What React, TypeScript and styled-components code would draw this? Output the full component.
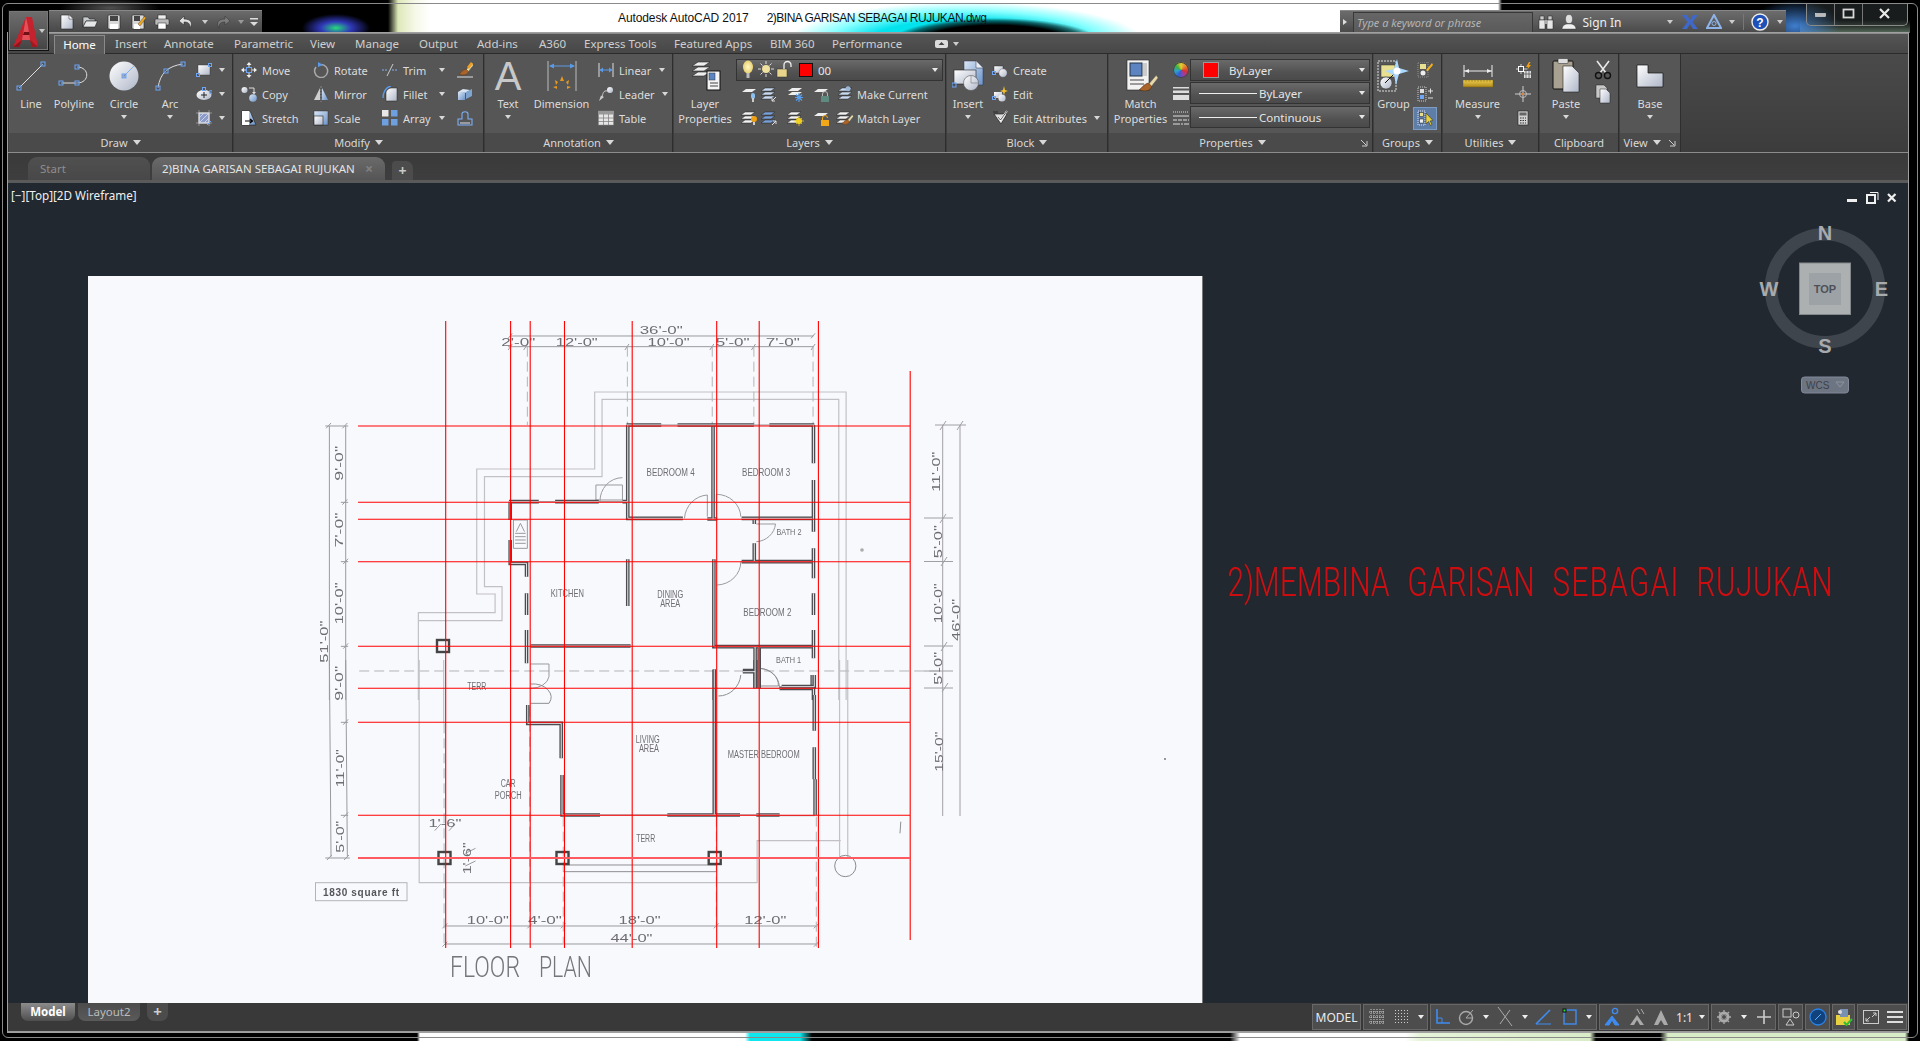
import React from "react";
import styled, { createGlobalStyle } from "styled-components";

const Global = createGlobalStyle`
  html, body { margin: 0; padding: 0; background: #000; overflow: hidden; }
  #root { width: 1920px; height: 1041px; }
  svg { display: block; flex: none; }
`;
const FONT = `"Noto Sans", "Liberation Sans", sans-serif`;

const Screen = styled.div`
  width: 1920px; height: 1041px; background: #000; position: relative; overflow: hidden;
  display: flex; flex-direction: column; font: 11px/15px ${FONT}; color: #dcdcdc;
`;
const Outline = styled.div`
  position: absolute; left: 2px; top: 3px; right: 2px; bottom: 3px; border: 1px solid #8a8a8a; border-radius: 6px;
  pointer-events: none; z-index: 5;
`;
const DefsSvg = styled.svg`position: absolute; width: 0; height: 0;`;

const TopBand = styled.header`
  height: 33px; position: relative; display: flex; align-items: flex-end; padding: 0 12px 0 49px; box-sizing: border-box;
  background:
    radial-gradient(ellipse 34px 14px at 336px 28px, rgba(40,230,130,.95), rgba(60,70,230,.8) 45%, transparent 100%),
    radial-gradient(ellipse 50px 10px at 110px 8px, rgba(200,200,200,.4), transparent),
    radial-gradient(ellipse 30px 10px at 205px 30px, rgba(120,120,140,.4), transparent),
    radial-gradient(ellipse 105px 24px at 995px 42px, #000 70%, rgba(0,0,0,.55) 88%, transparent 100%),
    radial-gradient(ellipse 178px 40px at 966px 42px, #03e3ee 55%, #8ff 78%, rgba(255,255,255,0) 100%),
    radial-gradient(ellipse 45px 26px at 1795px 26px, rgba(70,140,230,.9), transparent),
    linear-gradient(0deg, rgba(110,135,115,.8), transparent 40%) 1800px 0 / 110px 100% no-repeat,
    linear-gradient(90deg, #000 0, #000 388px, #dde8b8 398px, #f6f8e8 415px, #fff 430px, #fff 1498px, #000 1502px, #000 100%);
`;
const AppButton = styled.div`
  position: absolute; left: 8px; top: 10px; width: 41px; height: 41px; box-sizing: border-box; z-index: 3; display: flex; align-items: flex-start; padding: 5px 0 0 3px;
  border: 1px solid #111; outline: 1px solid #777; outline-offset: -2px;
  background: linear-gradient(#6e6e6e, #5a5a5a 50%, #434343);
`;
const Qat = styled.div`
  height: 23px; width: 213px; display: flex; align-items: center; box-sizing: border-box;
  background: linear-gradient(#6b6b6b, #565656 55%, #474747); border-top: 1px solid #888;
`;
const QatSlot = styled.div<{ $w: number }>`width: ${p => p.$w}px; display: flex; justify-content: center; align-items: center;`;
const DocTitle = styled.div`
  color: #111; font: 12px/15px "Liberation Sans", sans-serif; margin: 0 0 7px 356px; display: flex; white-space: pre; letter-spacing: -.1px;
`;
const DocName = styled.span`margin-left: 18px; letter-spacing: -.5px;`;
const SearchBar = styled.div`
  margin-left: auto; margin-right: 20px; width: 446px; height: 23px; display: flex; align-items: center; box-sizing: border-box;
  background: linear-gradient(#6c6c6c, #5a5a5a 55%, #484848); border-top: 1px solid #888;
`;
const SearchInput = styled.div`
  width: 180px; height: 21px; box-sizing: border-box; margin: 0 0 0 3px; padding-left: 3px; background: linear-gradient(#666, #5a5a5a);
  border: 1px solid #383838; color: #b4b4b4; font: italic 11px/19px ${FONT};
`;
const SignIn = styled.span`color: #eee; font-size: 12px;`;
const BarSlot = styled.div<{ $w: number }>`width: ${p => p.$w}px; height: 100%; display: flex; align-items: center; justify-content: center;`;
const Sep = styled.div`width: 1px; height: 16px; background: #777;`;
const WinButtons = styled.div`
  align-self: flex-start; margin-top: 3px; width: 102px; height: 23px; box-sizing: border-box; display: flex; border: 1px solid #8a8a8a;
  border-top: 0; border-radius: 0 0 5px 5px; background: rgba(70,80,80,.35);
`;
const WinBtn = styled.div<{ $w: number }>`width: ${p => p.$w}px; display: flex; align-items: center; justify-content: center; border-right: 1px solid #777; &:last-child { border-right: 0; }`;

const Frame = styled.div`
  margin-left: 8px; width: 1900px; height: 999px; display: flex; flex-direction: column; box-shadow: 0 0 0 1px #a0a0a0; z-index: 1; position: relative;
`;
const TabRow = styled.nav`
  height: 21px; box-sizing: border-box; background: linear-gradient(#555, #474747); display: flex; align-items: flex-end; padding-left: 46px;
  border-bottom: 1px solid #2b2b2b; border-top: 1px solid #8c8c8c;
`;
const Tab = styled.div<{ $w: number; $on?: boolean }>`
  width: ${p => p.$w}px; height: 18px; box-sizing: border-box; line-height: 16px; font-size: 11.5px; color: ${p => p.$on ? "#fff" : "#cfcfcf"}; white-space: nowrap;
  display: flex; align-items: center;
  ${p => p.$on ? `background:#5a5a5a;border:1px solid #8a8a8a;border-bottom:0;justify-content:center;margin:0 10px -1px 0;height:19px;` : ""}
`;
const ToggleWrap = styled.div`height: 18px; display: flex; align-items: center; gap: 4px;`;
const Ribbon = styled.section`
  height: 99px; box-sizing: border-box; display: flex; gap: 2px; padding-left: 1px; border-bottom: 1px solid #8c8c8c;
  background: linear-gradient(#4a4a4a, #3c3c3c);
`;
const Panel = styled.div<{ $w: number }>`width: ${p => p.$w}px; display: flex; flex-direction: column; box-shadow: 1px 0 0 #2e2e2e;`;
const PanelBody = styled.div`height: 79px; background: #565656; display: flex; align-items: flex-start;`;
const PanelTitle = styled.div`
  height: 19px; background: #4a4a4a; display: flex; align-items: center; color: #d8d8d8; font-size: 11px;
`;
const TitleMain = styled.div`flex: 1; display: flex; align-items: center; justify-content: center; gap: 5px;`;
const Corner = styled.div`width: 16px; display: flex; justify-content: center;`;
const Caret = styled.i<{ $c?: string; $m?: string; $s?: number }>`
  display: block; flex: none; width: 0; height: 0; border: ${p => p.$s || 3.5}px solid transparent; border-top: ${p => (p.$s || 3.5) + .5}px solid ${p => p.$c || "#d8d8d8"}; border-bottom: 0; margin: ${p => p.$m || "0"};
`;
const Large = styled.div<{ $w: number }>`width: ${p => p.$w}px; flex: none; display: flex; flex-direction: column; align-items: center; padding-top: 5px;`;
const LargeIcon = styled.div`height: 34px; display: flex; align-items: center; justify-content: center;`;
const LargeLabel = styled.div`margin-top: 3px; line-height: 15px; text-align: center; white-space: nowrap;`;
const GlyphSvg = styled.svg`overflow: visible;`;
const Stack = styled.div<{ $w: number; $pl?: number }>`width: ${p => p.$w}px; flex: none; box-sizing: border-box; padding-top: 4px; padding-left: ${p => p.$pl || 0}px; padding-right: 4px;`;
const Row = styled.div<{ $center?: boolean }>`height: 24px; display: flex; align-items: center; gap: 5px; white-space: nowrap; ${p => p.$center ? "justify-content:center;" : ""}`;
const PushCaret = styled(Caret)`margin-left: auto;`;
const ActiveTool = styled.div`width: 24px; height: 23px; display: flex; align-items: center; justify-content: center; background: #5e7ea8; border: 1px solid #7d9cc4; box-sizing: border-box;`;
const LayerCol = styled.div`width: 209px; flex: none; padding-top: 5px;`;
const Combo = styled.div<{ $w?: number; $mt?: number }>`
  height: 22px; box-sizing: border-box; margin-top: ${p => p.$mt || 0}px; width: ${p => p.$w || 208}px; display: flex; align-items: center; padding-right: 4px;
  background: linear-gradient(#6a6a6a, #525252 60%, #4a4a4a); border: 1px solid #333; color: #e6e6e6; font-size: 11.5px; white-space: nowrap;
`;
const Swatch = styled.div<{ $s: number; $b: string; $ml: number }>`width: ${p => p.$s}px; height: ${p => p.$s}px; box-sizing: border-box; background: #f00; border: 1px solid ${p => p.$b}; margin: 0 ${p => p.$ml}px;`;
const LineSample = styled.div<{ $w: number }>`width: ${p => p.$w}px; height: 1px; background: #eee; margin: 0 2px 0 8px;`;
const SlotRow = styled.div`height: 24px; display: flex; align-items: center; padding-left: 4px; white-space: nowrap;`;
const Slot = styled.div<{ $w: number }>`width: ${p => p.$w}px; display: flex; justify-content: center; flex: none;`;
const PropIcons = styled.div`width: 18px; flex: none; padding-top: 4px;`;
const PropRow = styled.div`height: 24px; display: flex; align-items: center; justify-content: center;`;
const Wheel = styled.div`width: 16px; height: 16px; border-radius: 50%; background: conic-gradient(#e8d030, #e08030, #d83030, #9040b0, #3060d0, #30a0d0, #40b040, #e8d030); box-shadow: inset 0 0 0 1px #444;`;

const FileTabs = styled.div`
  height: 27px; background: linear-gradient(#3a3a3a, #3e3e3e); display: flex; align-items: flex-end; padding-left: 20px; font-size: 11.5px;
`;
const FileTab = styled.div<{ $w: number; $on?: boolean; $mr: number }>`
  width: ${p => p.$w}px; height: 23px; margin-right: ${p => p.$mr}px; box-sizing: border-box; display: flex; align-items: center; justify-content: space-between;
  padding: 0 12px 0 ${p => p.$on ? 10 : 12}px; border-radius: 9px 9px 0 0; white-space: nowrap;
  background: ${p => p.$on ? "linear-gradient(#6a6a6a,#555)" : "linear-gradient(#505050,#484848)"}; color: ${p => p.$on ? "#e4e4e4" : "#8e8e8e"};
`;
const Close = styled.span`color: #808080; font-size: 14px; font-weight: 700;`;
const PlusTab = styled.div`width: 21px; height: 19px; border-radius: 4px 7px 0 0; background: #4c4c4c; color: #c8c8c8; font: 700 14px/19px ${FONT}; text-align: center;`;
const Divider = styled.div`height: 3px; background: #5a5a5a;`;

const Viewport = styled.main`height: 820px; background: #212830; position: relative; overflow: hidden;`;
const ViewLabel = styled.div`position: absolute; left: 3px; top: 5px; color: #f0f0f0; font: 11.7px/15px ${FONT};`;
const Overlay = styled.svg`position: absolute; left: 0; top: 0; pointer-events: none;`;

const ModelBar = styled.footer`height: 29px; background: #393939; display: flex; align-items: flex-start; padding: 0 1px 0 13px; box-sizing: border-box; border-bottom: 1px solid #9a9a9a;`;
const SheetTab = styled.div<{ $w: number; $on?: boolean }>`
  width: ${p => p.$w}px; height: 18px; box-sizing: border-box; border-radius: 0 0 7px 7px; margin-right: 3px; text-align: center; line-height: 17px; font-size: 11.5px;
  background: ${p => p.$on ? "linear-gradient(#8c8c8c,#4e4e4e)" : "linear-gradient(#4c4c4c,#5a5a5a)"}; color: ${p => p.$on ? "#fff" : "#bcbcbc"}; font-weight: ${p => p.$on ? 700 : 400};
`;
const SheetPlus = styled(SheetTab)`margin-left: 4px; font-size: 15px; font-weight: 700; color: #ccc; background: #4c4c4c;`;
const StatusRight = styled.div`margin-left: auto; display: flex; gap: 2px; padding-top: 1px; height: 27px;`;
const StatusGroup = styled.div`display: flex; align-items: center; height: 26px; box-sizing: border-box; background: #4d4d4d; border: 1px solid #686868;`;
const StatusItem = styled.div<{ $w: number }>`width: ${p => p.$w}px; flex: none; height: 100%; display: flex; align-items: center; justify-content: center; color: #eaeaea; font-size: 12px;`;
const BottomBand = styled.div`
  height: 8px; margin-top: 1px;
  background: linear-gradient(90deg, #000 0, #000 417px, #fff 420px, #fff 745px, #0ce8ee 750px, #0ce8ee 800px, #000 812px, #000 1230px, #fff 1240px, #fff 1405px, #e6f4d8 1420px, #d9ecc8 1590px, #000 1596px, #000 1660px, #d9ecc8 1668px, #d9ecc8 1905px, #000 1909px);
`;

/* plan drawing */
const PlanSvg = styled.svg`position: absolute; left: 0; top: 0;`;
const P = styled.path<{ $c?: string; $sw?: number; $dash?: string }>`
  fill: none; stroke: ${p => p.$c || "#a8a8ac"}; stroke-width: ${p => p.$sw || 1}; vector-effect: non-scaling-stroke;
  ${p => p.$dash ? `stroke-dasharray:${p.$dash};` : ""}
`;
const PlanText = styled.text<{ $c?: string }>`font-family: "Liberation Sans", sans-serif; fill: ${p => p.$c || "#6e6e72"}; text-anchor: middle; dominant-baseline: central;`;
const TitleWord = styled.text`font-family: Roboto, "Liberation Sans", sans-serif; font-weight: 300; font-size: 41px; fill: #cc0c0e;`;
const FloorWord = styled.text`font-family: Roboto, "Liberation Sans", sans-serif; font-weight: 300; font-size: 30px; fill: #75757a;`;
const SoftGroup = styled.g`filter: blur(.4px);`;

const S: React.FC<{ w?: number; h?: number; children?: React.ReactNode }> = ({ w = 16, h = 16, children }) => (
  <svg width={w} height={h} viewBox={`0 0 ${w} ${h}`}>{children}</svg>
);
const H: React.FC<{ x: number; y: number; s?: number }> = ({ x, y, s = 4 }) => (
  <rect x={x - s / 2} y={y - s / 2} width={s} height={s} fill="#3d4d66" fillOpacity=".35" stroke="#6ea6f5" strokeWidth="1" />
);
const Sheet: React.FC<{ y: number; f?: string; x?: number }> = ({ y, f = "#f2f2f2", x = 0 }) => (
  <polygon points={`${x + 4},${y} ${x + 14},${y} ${x + 10},${y + 3} ${x},${y + 3}`} fill={f} stroke="#222" strokeWidth=".5" />
);
const Sheets: React.FC<{ f?: string; x?: number; y?: number }> = ({ f, x = 0, y = 2 }) => (<><Sheet y={y} f={f} x={x} /><Sheet y={y + 4} f={f} x={x} /><Sheet y={y + 8} f={f} x={x} /></>);
const Brush: React.FC<{ x?: number; y?: number; s?: number }> = ({ x = 0, y = 0, s = 1 }) => (
  <g transform={`translate(${x} ${y}) scale(${s})`}>
    <path d="M14 1 L8 8 L10 10 L15.5 3 Z" fill="#e8d9a8" stroke="#555" strokeWidth=".4" />
    <path d="M8 7 C4 8 3 11 1 12 C5 14 10 13 10.5 9.5 Z" fill="#a8642a" stroke="#5a3414" strokeWidth=".5" />
  </g>
);

const I: Record<string, React.ReactNode> = {
  line: <S w={32} h={30}><line x1="4" y1="27" x2="28" y2="3" stroke="#ddd" /><H x={4} y={27} /><H x={28} y={3} /></S>,
  poly: <S w={34} h={30}><path d="M4 22 H20 C33 22 33 6 20 6" fill="none" stroke="#ddd" /><H x={4} y={22} /><H x={20} y={22} /><H x={20} y={6} /></S>,
  circle: <S w={32} h={32}><circle cx="16" cy="16" r="14.5" fill="url(#gw)" /><line x1="16" y1="16" x2="26" y2="6" stroke="#7eb0f5" /><H x={16} y={16} /></S>,
  arc: <S w={32} h={30}><path d="M4 27 C6 12 14 5 29 3" fill="none" stroke="#ddd" /><H x={4} y={27} /><H x={12} y={10} /><H x={29} y={3} /></S>,
  rect: <S><rect x="2" y="3" width="12" height="10" fill="url(#gw)" stroke="#333" strokeWidth=".4" /><H x={2} y={13} s={3} /><H x={14} y={3} s={3} /></S>,
  ellipse: <S><ellipse cx="8" cy="9" rx="7.5" ry="5" fill="url(#gw)" /><line x1="5" y1="9" x2="11" y2="9" stroke="#222" /><line x1="8" y1="6" x2="8" y2="12" stroke="#222" /><H x={8} y={3} s={3} /><H x={15} y={6} s={2.5} /></S>,
  hatch: <S><rect x="3" y="3" width="10" height="10" fill="#8c9cc8" stroke="#fff" /><path d="M3 8 L8 3 M3 13 L13 3 M8 13 L13 8" stroke="#dde" strokeWidth=".8" /><path d="M0 3 H16 M0 13 H16 M3 0 V16 M13 0 V16" stroke="#ccc" strokeWidth=".5" /><line x1="11" y1="15" x2="15" y2="11" stroke="#6ea6f5" /></S>,
  move: <S><path d="M8 0 L10.5 3 H5.5 Z M8 16 L5.5 13 H10.5 Z M0 8 L3 5.5 V10.5 Z M16 8 L13 5.5 V10.5 Z" fill="#eee" /><path d="M3 8 H5 M11 8 H13 M8 3 V5 M8 11 V13" stroke="#eee" /><rect x="5.5" y="5.5" width="5" height="5" fill="none" stroke="#6ea6f5" /></S>,
  copy: <S><circle cx="3.5" cy="4" r="3" fill="url(#gw)" /><circle cx="12" cy="12" r="3.8" fill="url(#gb)" /><path d="M8 2 H13 V7" fill="none" stroke="#ddd" /><path d="M11 6 H15 L13 8.5Z" fill="#ddd" /></S>,
  stretch: <S><path d="M1 1 H9 L15 15 H1 Z" fill="url(#gb)" stroke="#111" strokeWidth=".5" /><path d="M1 1 H8 V15 H1Z" fill="#fff" /><path d="M4 11 H11 M9 9 L11.5 11 L9 13" fill="none" stroke="#000" strokeWidth="1.2" /></S>,
  rotate: <S><path d="M8 2.5 A6.5 6.5 0 1 1 3 5" fill="none" stroke="#aaa" strokeWidth="1.5" /><path d="M5 0 L10 3 L5 5 Z" fill="#5b9ae6" /></S>,
  mirror: <S><path d="M7 2 V14 H1 Z" fill="#cfcfcf" /><path d="M9 2 V14 H15 Z" fill="url(#gb)" /><line x1="8" y1="0" x2="8" y2="16" stroke="#888" strokeDasharray="2 1" /></S>,
  scale: <S><rect x="1" y="1" width="14" height="14" fill="url(#gb)" stroke="#222" strokeWidth=".4" /><rect x="1" y="6" width="9" height="9" fill="url(#gw)" stroke="#222" strokeWidth=".6" /></S>,
  trim: <S><path d="M0 8 H5 M10 8 H16" stroke="#7eb0f5" strokeDasharray="2 1" /><line x1="5" y1="14" x2="11" y2="2" stroke="#ccc" /></S>,
  fillet: <S><path d="M4 15 V7 C4 4 7 2 10 2 H15 V15 Z" fill="url(#gw)" stroke="#222" strokeWidth=".5" /><path d="M1 12 C1 6 4 1 9 0" fill="none" stroke="#5b9ae6" strokeWidth="1.4" /></S>,
  array: <S><rect x="0" y="0" width="6.5" height="6.5" fill="#e8e8e8" /><rect x="9" y="0" width="6.5" height="6.5" fill="#6ea0e0" /><rect x="0" y="9" width="6.5" height="6.5" fill="#6ea0e0" /><rect x="9" y="9" width="6.5" height="6.5" fill="#6ea0e0" /></S>,
  erase: <S><Brush x={1} y={0} /><line x1="0" y1="15" x2="16" y2="15" stroke="#ddd" /><path d="M10 5 L14 0 L16 2 L12 7Z" fill="#f0a020" /></S>,
  explode: <S><path d="M1 6 L6 3 L13 4 L8 7 Z" fill="#d8e4f2" /><path d="M1 6 H8 V14 H1Z" fill="url(#gb)" /><path d="M9 6 L15 3 V10 L9 13Z" fill="#7fa4d0" /></S>,
  offset: <S><path d="M1 15 V9 H5 V4 C5 1 11 1 11 4 V9 H15 V15 Z" fill="none" stroke="#7eb0f5" strokeWidth="1.1" /><path d="M3 13 H13" stroke="#dde" /></S>,
  dim: <S w={32} h={32}><path d="M2 1 V31 M30 1 V31" stroke="#bbb" /><path d="M4 6 H28" stroke="#5b9ae6" /><path d="M3 6 L8 3.5 V8.5 Z M29 6 L24 3.5 V8.5 Z" fill="#5b9ae6" /><path d="M16 16 L18 21 H14Z M9 20 L12 22 L10 25 Z M23 20 L20 22 L22 25Z M7 27 L11 26 L11 29Z M25 27 L21 26 L21 29Z" fill="#e89a20" /></S>,
  linear: <S><path d="M1 1 V15 M15 1 V15" stroke="#ddd" /><path d="M2 8 H14" stroke="#5b9ae6" /><path d="M1.5 8 L5 5.5 V10.5 Z M14.5 8 L11 5.5 V10.5 Z" fill="#5b9ae6" /></S>,
  leader: <S><circle cx="12" cy="4" r="3" fill="url(#gw)" /><path d="M9.5 5 C5 4 5 8 4 11" fill="none" stroke="#ccc" /><path d="M1 15 L3 9.5 L6 11Z" fill="#ccc" /></S>,
  table: <S><rect x="0.5" y="1" width="15" height="14" fill="#e6e6e6" stroke="#888" strokeWidth=".5" /><rect x="0.5" y="1" width="15" height="3.5" fill="#999" /><path d="M0 8 H16 M0 11.5 H16 M5.5 4 V15 M10.5 4 V15" stroke="#777" strokeWidth=".7" /></S>,
  layerProps: <S w={32} h={32}><polygon points="9,2 21,2 15,6 3,6" fill="#eee" stroke="#222" strokeWidth=".6" /><polygon points="9,7 21,7 15,11 3,11" fill="#eee" stroke="#222" strokeWidth=".6" /><polygon points="9,12 21,12 15,16 3,16" fill="#eee" stroke="#222" strokeWidth=".6" /><rect x="18" y="11" width="13" height="19" fill="#f4f4f4" stroke="#111" /><rect x="20" y="13" width="6" height="7" fill="#5b84c0" stroke="#234" strokeWidth=".5" /><path d="M21 23 H29 M21 26 H29" stroke="#444" /></S>,
  bulb: <S h={20}><ellipse cx="8" cy="7" rx="5" ry="6.5" fill="url(#gy)" /><rect x="6.5" y="13" width="3" height="5" fill="#bbb" /></S>,
  sun: <S h={20}><circle cx="8" cy="9" r="4" fill="#f0e2a0" /><path d="M8 1 V4 M8 14 V17 M0 9 H3 M13 9 H16 M2.5 3.5 L4.5 5.5 M11.5 12.5 L13.5 14.5 M13.5 3.5 L11.5 5.5 M4.5 12.5 L2.5 14.5" stroke="#ddd" /></S>,
  lock: <S w={18} h={20}><rect x="1" y="9" width="10" height="8" fill="#e8d48a" stroke="#333" strokeWidth=".5" /><path d="M8 9 V5 A3.5 3.5 0 0 1 15 5 V7" fill="none" stroke="#eee" strokeWidth="1.3" /></S>,
  l1: <S w={18}><polygon points="5,3 15,3 11,6 1,6" fill="#eee" /><rect x="10" y="7" width="4" height="6" rx="2" fill="#8ac0f0" /><rect x="11" y="12" width="2" height="4" fill="#ccc" /></S>,
  l2: <S w={18}><Sheets f="#c8daf2" /><path d="M15 11 L11 15 M11 12 V15 H14" fill="none" stroke="#ddd" /></S>,
  l3: <S w={18}><polygon points="5,2 15,2 11,5 1,5" fill="#eee" /><polygon points="5,6 15,6 11,9 1,9" fill="#eee" /><path d="M12 7 V16 M8 11.5 H16 M9 8.5 L15 14.5 M15 8.5 L9 14.5" stroke="#5aa0ee" strokeWidth="1.1" /></S>,
  l4: <S w={18}><polygon points="5,3 15,3 11,6 1,6" fill="#eee" /><rect x="8" y="10" width="8" height="6" fill="#5f8a80" /><path d="M9.5 10 V8 A2.5 2.5 0 0 1 14.5 8 V10" fill="none" stroke="#bbb" /></S>,
  l5: <S w={18}><Sheets f="#c8daf2" x={2} /><circle cx="12" cy="2.8" r="2.5" fill="#9cb8d8" /></S>,
  l6: <S w={18}><Sheets /><circle cx="13" cy="9" r="3" fill="#f0a010" /><rect x="12" y="12" width="2" height="3" fill="#ccc" /></S>,
  l7: <S w={18}><Sheets f="#7aa0d8" /><path d="M11 15 L15 11 M12 11 H15 V14" fill="none" stroke="#ddd" /></S>,
  l8: <S w={18}><Sheets /><circle cx="12" cy="11" r="3" fill="#f0d020" /><path d="M12 6 V16 M7 11 H17 M9 8 L15 14 M15 8 L9 14" stroke="#f0d020" strokeWidth=".7" /></S>,
  l9: <S w={18}><polygon points="5,3 15,3 11,6 1,6" fill="#eee" /><rect x="8" y="10" width="8" height="6" fill="#f0a818" /><path d="M9.5 10 V8 A2.5 2.5 0 0 1 14.5 8" fill="none" stroke="#f0a818" /></S>,
  l10: <S w={18}><Sheets /><Brush x={5} y={4} s={.8} /></S>,
  insert: <S w={32} h={32}><path d="M12 1 H24 L31 8 V25 H12Z" fill="url(#gb)" stroke="#334" strokeWidth=".5" /><path d="M24 1 V8 H31" fill="#e6eef8" stroke="#334" strokeWidth=".5" /><rect x="2" y="10" width="22" height="14" fill="url(#gw)" stroke="#222" strokeWidth=".6" /><circle cx="19" cy="23" r="7.5" fill="url(#gw)" stroke="#555" strokeWidth=".6" /><path d="M19 23 V16 M19 23 H26" stroke="#777" strokeWidth=".6" /><H x={2} y={25} /></S>,
  create: <S><rect x="2" y="4" width="9" height="7" fill="url(#gw)" stroke="#222" strokeWidth=".4" /><circle cx="11" cy="11" r="4.2" fill="url(#gw)" stroke="#444" strokeWidth=".4" /><H x={2} y={11} s={3} /></S>,
  edit: <S><rect x="2" y="6" width="8" height="6" fill="url(#gw)" /><circle cx="10" cy="12" r="3.6" fill="url(#gw)" /><H x={2} y={12} s={3} /><path d="M12 0 L13 4 L16 5 L13 6 L12 9 L11 6 L8 5 L11 4Z" fill="#f0c030" /></S>,
  attr: <S><path d="M1 2 H6 M2 4 H15 L9 14 Z" fill="#ddd" stroke="#111" strokeWidth=".6" /><path d="M6 7 L8.5 10 L15 1" fill="none" stroke="#fff" strokeWidth="1.8" /><path d="M6 7 L8.5 10 L15 1" fill="none" stroke="#111" strokeWidth=".7" /></S>,
  match: <S w={34} h={34}><rect x="3" y="1" width="22" height="30" fill="#f2f2f2" stroke="#222" strokeWidth=".6" /><rect x="6" y="4" width="12" height="13" fill="#5b84c0" stroke="#234" /><rect x="19" y="4" width="4" height="13" fill="#ccc" /><path d="M6 21 H20 M6 25 H20" stroke="#444" /><Brush x={14} y={15} s={1.3} /></S>,
  weight: <S w={18}><rect x="1" y="1" width="16" height="1.5" fill="#ddd" /><rect x="1" y="4.5" width="16" height="2.5" fill="#ddd" /><rect x="1" y="9" width="16" height="5" fill="#ddd" /></S>,
  ltype: <S w={18}><path d="M1 2 H17" stroke="#ddd" strokeDasharray="1 1" /><path d="M1 6 H17" stroke="#ddd" /><path d="M1 10 H17" stroke="#ddd" strokeDasharray="4 1" /><path d="M1 14 H17" stroke="#ddd" strokeDasharray="7 1 2 1" /></S>,
  group: <S w={34} h={34}><rect x="1" y="2" width="18" height="30" fill="none" stroke="#ddd" strokeDasharray="2 1" /><rect x="4" y="6" width="14" height="12" fill="#e8e090" stroke="#333" strokeWidth=".5" /><circle cx="9" cy="24" r="6" fill="url(#gw)" stroke="#333" strokeWidth=".5" /><path d="M19 13 L8 24" stroke="#111" /><path d="M20 0 L22 9 L32 12 L22 15 L19 26 L17 16 L8 12 L17 10Z" fill="#aad8ff" /><circle cx="20" cy="12" r="3.5" fill="#fff" /></S>,
  g1: <S><rect x="3" y="2" width="6" height="5" fill="#e8e090" /><circle cx="6" cy="11" r="2.5" fill="#eee" /><rect x="1" y="0" width="10" height="15" fill="none" stroke="#bbb" strokeDasharray="1 1" strokeWidth=".6" /><path d="M15 1 L9 8 L10.5 9.5 L16 3 Z" fill="#f0b020" /></S>,
  g2: <S><rect x="1" y="1" width="8" height="14" fill="none" stroke="#ccc" strokeDasharray="1 1" /><rect x="3" y="3" width="4" height="4" fill="#ddd" /><rect x="3" y="9" width="4" height="4" fill="#6ea6f5" /><path d="M11 5 H16 M13.5 2.5 V7.5 M11 12 H16" stroke="#ddd" /></S>,
  g3: <S><rect x="1" y="1" width="7" height="14" fill="none" stroke="#dde" strokeDasharray="1 1" /><rect x="2.5" y="2.5" width="4" height="4" fill="#e8e090" stroke="#222" strokeWidth=".5" /><rect x="2.5" y="9" width="4" height="4" fill="#eee" stroke="#222" strokeWidth=".5" /><path d="M9 3 V14 L11.5 11.5 L13.5 15.5 L15 14.5 L13 11 L16 10.5 Z" fill="#e8d040" stroke="#222" strokeWidth=".5" /></S>,
  measure: <S w={30} h={26}><path d="M1 2 V14 M29 2 V14 M1 8 H29" stroke="#eee" /><path d="M1.5 8 L6 6 V10Z M28.5 8 L24 6 V10Z" fill="#eee" /><rect x="0" y="17" width="30" height="7" fill="url(#gy2)" stroke="#7a6010" strokeWidth=".5" /><path d="M3 17 V19 M6 17 V19 M9 17 V19 M12 17 V19 M15 17 V19 M18 17 V19 M21 17 V19 M24 17 V19 M27 17 V19" stroke="#7a6010" strokeWidth=".5" /></S>,
  u1: <S><path d="M1 7 H12 M6 2 V12" stroke="#eee" strokeWidth=".8" /><rect x="3.5" y="4.5" width="5" height="5" fill="#555" stroke="#fff" /><path d="M14 0 L11 5 H13 L12 8 L16 3 H14 L15.5 0Z" fill="#f0a010" /><rect x="9" y="9" width="7" height="7" fill="#ddd" /><path d="M11 9 V16 M14 9 V16 M9 12 H16" stroke="#333" strokeWidth=".6" /></S>,
  u2: <S><path d="M8 0 V16 M0 8 H16" stroke="#ddd" strokeWidth=".9" /><circle cx="8" cy="8" r="3.5" fill="none" stroke="#bbb" /><circle cx="8" cy="8" r="1.2" fill="#e08030" /></S>,
  u3: <S><rect x="3" y="1" width="10" height="14" fill="#d2d2d2" stroke="#222" strokeWidth=".6" /><rect x="4.5" y="2.5" width="7" height="3" fill="#666" /><path d="M5 8 H11 M5 10.5 H11 M5 13 H11" stroke="#333" strokeDasharray="1.5 1" /></S>,
  paste: <S w={28} h={36}><rect x="1" y="3" width="20" height="28" rx="1" fill="#a8a090" stroke="#111" /><rect x="6" y="0.5" width="10" height="5" rx="1" fill="#ddd" stroke="#222" strokeWidth=".5" /><path d="M11 8 H20 L27 15 V34 H11Z" fill="url(#gw)" stroke="#222" strokeWidth=".6" /></S>,
  cut: <S w={18} h={20}><path d="M3 1 L12 13 M15 1 L6 13" stroke="#e8e8e8" strokeWidth="1.6" /><circle cx="4.5" cy="15.5" r="3" fill="none" stroke="#111" strokeWidth="1.4" /><circle cx="13.5" cy="15.5" r="3" fill="none" stroke="#111" strokeWidth="1.4" /></S>,
  copy2: <S w={18} h={20}><path d="M2 1 H10 L13 4 V14 H2Z" fill="#c8c8c8" stroke="#222" strokeWidth=".5" /><path d="M6 5 H12 L16 9 V19 H6Z" fill="url(#gw)" stroke="#222" strokeWidth=".5" /></S>,
  base: <S w={28} h={24}><path d="M1 1 H12 V9 H27 V23 H1 Z" fill="url(#gw)" stroke="#111" strokeWidth=".7" /></S>,
  qNew: <S><path d="M2 1 H10 L14 5 V15 H2Z" fill="url(#gw)" stroke="#222" strokeWidth=".6" /><path d="M10 1 V5 H14" fill="#fff" stroke="#222" strokeWidth=".5" /></S>,
  qOpen: <S><path d="M1 3 H6 L7.5 5 H13 V7 H4 L1 13Z" fill="#c8ccd0" stroke="#222" strokeWidth=".6" /><path d="M4 7 H15.5 L13 13 H1Z" fill="#e4e6e8" stroke="#222" strokeWidth=".6" /></S>,
  qSave: <S><rect x="2" y="1" width="12" height="14" rx="1" fill="#d8d8d8" stroke="#222" strokeWidth=".6" /><rect x="4" y="2" width="8" height="5" fill="#444" /><rect x="4" y="10" width="8" height="5" fill="#fff" /></S>,
  qSaveAs: <S><rect x="2" y="1" width="12" height="14" rx="1" fill="#d8d8d8" stroke="#222" strokeWidth=".6" /><rect x="4" y="2" width="6" height="5" fill="#444" /><rect x="4" y="10" width="6" height="5" fill="#fff" /><path d="M15 2 L8 10 L10 12 L16 4 Z" fill="#f0a820" stroke="#333" strokeWidth=".4" /></S>,
  qPrint: <S><rect x="4" y="1" width="8" height="5" fill="#eee" stroke="#222" strokeWidth=".5" /><rect x="1" y="5" width="14" height="6" rx="1" fill="#bbb" stroke="#222" strokeWidth=".5" /><rect x="4" y="9" width="8" height="6" fill="#fff" stroke="#222" strokeWidth=".5" /></S>,
  qUndo: <S><path d="M6 2 L1 7 L6 11 V8 C10 8 12 9 12 14 C15 9 13 5 6 5Z" fill="#e0e0e0" stroke="#222" strokeWidth=".5" /></S>,
  qRedo: <S><path d="M10 2 L15 7 L10 11 V8 C6 8 4 9 4 14 C1 9 3 5 10 5Z" fill="#7c7c7c" stroke="#333" strokeWidth=".5" /></S>,
  qMenu: <S w={10}><rect x="1" y="4" width="8" height="1.5" fill="#ddd" /><path d="M1 8 H9 L5 12Z" fill="#ddd" /></S>,
  binoc: <S><rect x="2" y="2" width="4" height="4" fill="#ccc" stroke="#222" strokeWidth=".5" /><rect x="10" y="2" width="4" height="4" fill="#ccc" stroke="#222" strokeWidth=".5" /><rect x="1" y="6" width="6" height="9" fill="#e6e6e6" stroke="#222" strokeWidth=".5" /><rect x="9" y="6" width="6" height="9" fill="#e6e6e6" stroke="#222" strokeWidth=".5" /><rect x="7" y="6" width="2" height="4" fill="#aaa" /></S>,
  user: <S><ellipse cx="8" cy="5" rx="3.5" ry="4.5" fill="#e0e0e0" stroke="#333" strokeWidth=".4" /><path d="M1 15 C2 10 5 10 8 10 C11 10 14 10 15 15Z" fill="#f0f0f0" stroke="#333" strokeWidth=".4" /></S>,
  xch: <S><path d="M0 1 H5 L8 6 L11 1 H16 L10.5 8 L16 15 H11 L8 10 L5 15 H0 L5.5 8Z" fill="#3f68c8" /></S>,
  a360: <S><path d="M8 1 L15 14 H1Z" fill="none" stroke="#8fb4ea" strokeWidth="2" /><circle cx="8" cy="9.5" r="2" fill="none" stroke="#8fb4ea" /></S>,
  help: <S w={18} h={18}><circle cx="9" cy="9" r="8" fill="#1f50b8" stroke="#eee" strokeWidth="1.4" /><text x="9" y="13.5" fontFamily="Liberation Sans" fontWeight="700" fontSize="12" fill="#fff" textAnchor="middle">?</text></S>,
  winMin: <S w={14} h={10}><rect x="1.5" y="4.5" width="10" height="3" fill="#bbb" stroke="#e0e0e0" strokeWidth=".6" /></S>,
  winMax: <S w={14} h={12}><rect x="1.5" y="1.5" width="10" height="8" fill="none" stroke="#d8d8d8" strokeWidth="1.8" /></S>,
  winX: <S w={14} h={12}><path d="M2 1 L11 10 M11 1 L2 10" stroke="#e8e8e8" strokeWidth="2.2" /></S>,
  logo: <svg width="28" height="32" viewBox="0 0 28 32"><path d="M1 31 L14 1 H20 L26 31 H20 L18 24 H10 L7 31 Z" fill="#c4222c" /><path d="M14 1 L10 24 H18 L16 10 Z" fill="#e2505a" /><path d="M10 24 L7 31 H1 Z" fill="#8f141c" /><path d="M18 24 L20 31 H26 Z" fill="#a01820" /><polygon points="12,16 17,16 17.5,19 11,19" fill="#701016" /></svg>,
  ribbonToggle: <S w={14} h={10}><rect x="0" y="1" width="13" height="8" rx="2" fill="#dcdcdc" /><path d="M6.5 3 L9.5 6 H3.5Z" fill="#444" /></S>,
  corner: <S w={8} h={8}><path d="M1 1 L6 6 M7 2 V7 H2" fill="none" stroke="#ccc" /></S>,
  sGrid: <S w={16} h={18}><path d="M2 1 V17 M5 1 V17 M8 1 V17 M11 1 V17 M14 1 V17 M0 4 H16 M0 9 H16 M0 14 H16" stroke="#cfcfcf" strokeDasharray="1 1" /></S>,
  sSnap: <S w={16} h={16}><g fill="#cfcfcf">{[1, 4, 7, 10, 13].flatMap(a => [1, 4, 7, 10, 13].map(b => <rect key={`${a}-${b}`} x={a} y={b} width="1" height="1" />))}</g></S>,
  sOrtho: <S w={16} h={18}><path d="M2 1 V15 H15" fill="none" stroke="#3f8cf0" strokeWidth="1.6" /><path d="M2 10 H7 V15" fill="none" stroke="#3f8cf0" /></S>,
  sPolar: <S w={18} h={18}><circle cx="8" cy="10" r="6.5" fill="none" stroke="#aaa" strokeWidth="1.4" /><path d="M8 10 L15 2 M8 10 H15" stroke="#aaa" /></S>,
  sIso: <S w={18} h={20}><path d="M2 0 L16 19 M14 3 L4 17" stroke="#aaa" /></S>,
  sTrack: <S w={18} h={18}><path d="M1 16 L15 2" stroke="#3f8cf0" strokeWidth="1.6" /><path d="M1 16 H16" stroke="#3f8cf0" /></S>,
  sOsnap: <S w={16} h={18}><rect x="2" y="2" width="12" height="14" fill="none" stroke="#3f8cf0" strokeWidth="1.4" /><rect x="0.5" y="0.5" width="4" height="4" fill="#111" /><rect x="1.5" y="1.5" width="2" height="2" fill="#2ee02e" /></S>,
  sAn1: <S w={18} h={20}><path d="M9 9 L2 18 H6 L9 13 L12 18 H16Z" fill="#3f8cf0" stroke="#3f8cf0" /><circle cx="12" cy="4" r="2.6" fill="none" stroke="#3f8cf0" strokeWidth="1.4" /></S>,
  sAn2: <S w={18} h={20}><path d="M9 8 L2 18 H6 L9 13 L12 18 H16Z" fill="#aaa" /><path d="M9 2 L12 7 M13 2 L16 7" stroke="#aaa" /></S>,
  sAn3: <S w={18} h={20}><path d="M9 3 L2 18 H6 L9 13 L12 18 H16Z" fill="#aaa" /></S>,
  sGear: <S w={14} h={14}><circle cx="7" cy="7" r="4.2" fill="none" stroke="#aaa" strokeWidth="2.6" /><path d="M7 0 V14 M0 7 H14 M2 2 L12 12 M12 2 L2 12" stroke="#aaa" strokeWidth="1.3" /><circle cx="7" cy="7" r="2" fill="#4d4d4d" /></S>,
  sPlus: <S w={16} h={16}><path d="M8 1 V15 M1 8 H15" stroke="#ccc" strokeWidth="1.6" /></S>,
  sWs: <S w={18} h={18}><rect x="1" y="1" width="8" height="8" fill="none" stroke="#ccc" /><circle cx="14" cy="7" r="3" fill="none" stroke="#ccc" /><path d="M8 11 L12 17 H4Z" fill="none" stroke="#ccc" /></S>,
  sHw: <S w={18} h={18}><circle cx="9" cy="9" r="8" fill="#12427c" stroke="#2a82e8" strokeWidth="1.3" /><path d="M6 12 L12 6" stroke="#5bb0f8" /></S>,
  sCu: <S w={18} h={18}><rect x="1" y="7" width="14" height="10" fill="#e8d040" /><rect x="5" y="1" width="8" height="8" fill="#7a90b0" /><circle cx="5" cy="4" r="2" fill="#ddd" /><path d="M9 14 L11.5 17 L17 11" fill="none" stroke="#30c030" strokeWidth="2" /></S>,
  sFull: <S w={16} h={14}><rect x="0.5" y="0.5" width="15" height="13" fill="none" stroke="#ccc" /><path d="M3 11 L7 7 M3 8 V11 H6 M13 3 L9 7 M10 3 H13 V6" fill="none" stroke="#ccc" /></S>,
  sMenu: <S w={16} h={14}><rect x="0" y="1" width="16" height="2" fill="#ddd" /><rect x="0" y="6" width="16" height="2" fill="#ddd" /><rect x="0" y="11" width="16" height="2" fill="#ddd" /></S>,
};

const L: React.FC<{ w: number; icon: string; text: string[]; arrow?: boolean }> = ({ w, icon, text, arrow }) => (
  <Large $w={w}>
    <LargeIcon>{I[icon]}</LargeIcon>
    <LargeLabel>{text.map(t => <div key={t}>{t}</div>)}</LargeLabel>
    {arrow && <Caret $m="4px 0 0" />}
  </Large>
);
const Title: React.FC<{ t: string; caret?: boolean; corner?: boolean }> = ({ t, caret = true, corner }) => (
  <PanelTitle>
    <TitleMain>{t}{caret && <Caret $s={4.5} />}</TitleMain>
    {corner && <Corner>{I.corner}</Corner>}
  </PanelTitle>
);

const TABS: [string, number][] = [["Insert", 49], ["Annotate", 70], ["Parametric", 76], ["View", 45], ["Manage", 64], ["Output", 58], ["Add-ins", 62], ["A360", 45], ["Express Tools", 90], ["Featured Apps", 96], ["BIM 360", 62], ["Performance", 103]];

const UP = "translate(300 300) scale(.40816 .33333)";
const LO = "translate(300 660) scale(.40816 .33333)";

const WALLS_UP = "M800 375 H885 M925 375 H1112 M1150 375 H1260 M803 375 V655 H938 M1012 380 V660 M998 657 H1022 M1082 655 H1255 M1258 375 V490 M1258 540 V695 M1258 745 V835 M1258 880 V945 M1258 990 V1075 M1258 1125 V1200 M512 605 H585 M625 605 H732 M790 605 H803 M515 605 V660 M515 720 V790 H555 V830 M555 880 V945 M555 990 V1090 M565 1038 H810 M803 778 V918 M1014 778 V1040 H1255 M1082 785 H1255 M1113 730 V785 M1113 660 V672 M1115 1040 V1165 M1085 1112 H1115 M1125 1040 V1165 M1175 1165 H1255 V1125 M1015 1108 V1200";
const THIN_UP = "M885 375 H925 M1112 375 H1150 M585 605 H625 M732 605 H790 M942 655 A60 75 0 0 1 998 585 V650 M1080 650 A60 70 0 0 0 1020 583 V650 M725 555 H790 V600 H725 Z M735 605 A55 70 0 0 1 790 533 M1118 725 A50 60 0 0 0 1165 672 H1118 M1022 855 A60 70 0 0 0 1080 785 M1125 1105 A50 60 0 0 1 1175 1165 H1125 M565 1092 H610 V1130 A45 40 0 0 1 565 1165 M523 660 H557 V745 H523 Z M530 695 L540 670 L550 695 M527 700 H553 M527 710 H553 M527 720 H553 M527 730 H553";
const TERR_UP = "M290 1200 V938 H478 V882 H433 V507 H722 V276 H1338 V1200 M290 962 H495 V860 H452 V530 H740 V298 H1320 V1200";
const DIM_UP = "M72 378 V1200 M112 378 V1200 M515 108 H1258 M510 140 H1258 M62 378 H118 M100 607 H118 M100 785 H118 M100 1039 H118 M64 385 L76 369 M104 385 L116 369 M104 614 L116 598 M106 792 L118 776 M106 1046 L118 1030 M510 115 L520 100 M510 150 L520 132 M548 150 L558 132 M796 150 L806 132 M1004 150 L1014 132 M1106 150 L1116 132 M1252 150 L1262 132 M1252 115 L1262 100";
const DASH_UP = "M557 140 V375 M802 140 V375 M1010 140 V375 M1112 140 V375 M1257 140 V375 M145 1113 H1568";
const WALLS_LO = "M558 135 V190 H640 V295 M642 345 V465 H735 M900 465 H1078 M1118 465 H1175 M1015 30 V465 M1260 45 V80 H1180 M1260 105 V212 M1260 262 V358 M1262 358 V465 M1115 0 V85 M1125 0 V85 M1085 35 H1115";
const THIN_LO = "M735 465 H900 M1078 465 H1118 M1175 467 H1262 M565 72 A45 40 0 0 1 610 130 H565 M1025 108 A55 70 0 0 0 1080 45 M1125 25 A50 50 0 0 1 1172 78 H1125 M645 615 H1020 M645 635 H1020 M1472 485 L1470 520";
const TERR_LO = "M292 0 V668 H1120 V542 H1325 M1322 0 V590 M1342 0 V590 M352 0 V190";
const DIM_LO = "M72 0 L76 590 M112 0 L116 590 M355 798 H1268 M355 852 H1268 M100 187 H118 M100 466 H118 M62 594 H122 M106 194 L118 178 M106 473 L118 457 M66 600 L78 585 M108 600 L120 585 M349 805 L361 790 M557 805 L569 790 M639 805 L651 790 M1014 805 L1026 790 M1259 805 L1271 790 M349 860 L361 845 M1259 860 L1271 845 M330 512 L345 492 M365 512 L380 492 M405 580 L430 565 M405 618 L430 603";
const DASH_LO = "M353 190 V860 M563 140 V790 M645 470 V850 M1020 470 V800 M1265 470 V860";

type TX = { t: string; x: number; y: number; w: number; s?: number; low?: boolean; r?: boolean; c?: string };
const TEXTS: TX[] = [
  { t: "36'-0\"", x: 885, y: 90, w: 43 }, { t: "2'-0\"", x: 535, y: 127, w: 34 }, { t: "12'-0\"", x: 678, y: 127, w: 42 }, { t: "10'-0\"", x: 903, y: 127, w: 42 }, { t: "5'-0\"", x: 1060, y: 127, w: 34 }, { t: "7'-0\"", x: 1183, y: 127, w: 34 },
  { t: "BEDROOM 4", x: 908, y: 515, w: 48, s: 11 }, { t: "BEDROOM 3", x: 1142, y: 515, w: 48, s: 11 }, { t: "KITCHEN", x: 655, y: 878, w: 33, s: 11 }, { t: "DINING", x: 907, y: 882, w: 26, s: 10 }, { t: "AREA", x: 907, y: 910, w: 20, s: 10 }, { t: "BEDROOM 2", x: 1145, y: 935, w: 48, s: 11 }, { t: "BATH 2", x: 1198, y: 697, w: 25, s: 9 }, { t: "BATH 1", x: 1197, y: 1079, w: 25, s: 9 }, { t: "TERR", x: 433, y: 1158, w: 19, s: 10 },
  { t: "9'-0\"", x: 97, y: 490, w: 35, r: true }, { t: "7'-0\"", x: 97, y: 690, w: 35, r: true }, { t: "10'-0\"", x: 97, y: 910, w: 42, r: true }, { t: "51'-0\"", x: 60, y: 1025, w: 42, r: true }, { t: "9'-0\"", x: 97, y: 1150, w: 35, r: true },
  { t: "LIVING", x: 852, y: 238, w: 24, s: 10, low: true }, { t: "AREA", x: 855, y: 266, w: 20, s: 10, low: true }, { t: "MASTER BEDROOM", x: 1136, y: 281, w: 72, s: 11, low: true }, { t: "CAR", x: 510, y: 370, w: 15, s: 10, low: true }, { t: "PORCH", x: 510, y: 407, w: 27, s: 10, low: true }, { t: "TERR", x: 847, y: 536, w: 19, s: 10, low: true },
  { t: "11'-0\"", x: 100, y: 325, w: 38, r: true, low: true }, { t: "5'-0\"", x: 100, y: 530, w: 32, r: true, low: true }, { t: "1'-6\"", x: 355, y: 490, w: 33, low: true }, { t: "1'-6\"", x: 410, y: 595, w: 32, r: true, low: true },
  { t: "10'-0\"", x: 460, y: 782, w: 42, low: true }, { t: "4'-0\"", x: 600, y: 782, w: 34, low: true }, { t: "18'-0\"", x: 832, y: 782, w: 42, low: true }, { t: "12'-0\"", x: 1140, y: 782, w: 42, low: true }, { t: "44'-0\"", x: 812, y: 835, w: 42, low: true },
];
const RIGHT_TEXTS: [string, number, number, number][] = [["11'-0\"", 110, 515, 40], ["5'-0\"", 115, 725, 33], ["10'-0\"", 115, 910, 40], ["46'-0\"", 168, 960, 42], ["5'-0\"", 115, 1105, 33], ["15'-0\"", 118, 1355, 40]];

const RED_V: [number, number, number][] = [[445.7, 321, 948], [510.6, 321, 948], [530.2, 321, 948], [564.5, 321, 948], [632.2, 321, 948], [716.7, 321, 948], [759.2, 321, 948], [818.4, 321, 948], [910.2, 371, 940]];
const RED_H = [426, 502.3, 519.3, 561.7, 646.3, 688.3, 722.3, 815.3];
const COLS: [number, number][] = [[443, 646], [444.5, 858], [562.5, 858], [714.7, 858]];
const TITLE_WORDS: [string, number, number][] = [["2)MEMBINA", 1227, 162], ["GARISAN", 1407, 127], ["SEBAGAI", 1552, 126], ["RUJUKAN", 1696, 136]];
const SQUEEZE = 0.72;

const Plan: React.FC = () => (
  <PlanSvg width={1900} height={820} viewBox="8 183 1900 820">
    <rect x="88" y="276" width="1114" height="727" fill="#f8f9fd" />
    <line x1="1202.5" y1="276" x2="1202.5" y2="1003" stroke="#777" />
    <SoftGroup>
      <g transform={UP}>
        <P d={TERR_UP} $c="#c2c2c6" $sw={1.2} />
        <P d={DIM_UP} $c="#9a9a9e" />
        <P d={DASH_UP} $c="#b4b4b8" $dash="10 5" />
        <P d={THIN_UP} $c="#9a9a9e" />
        <P d={WALLS_UP} $c="#4c4c50" $sw={3.6} />
        <P d={WALLS_UP} $c="#e4e6ea" $sw={1} />
      </g>
      <g transform={LO}>
        <P d={TERR_LO} $c="#c2c2c6" $sw={1.2} />
        <P d={DIM_LO} $c="#9a9a9e" />
        <P d={DASH_LO} $c="#b4b4b8" $dash="10 5" />
        <P d={THIN_LO} $c="#8e8e92" />
        <P d={WALLS_LO} $c="#4c4c50" $sw={3.6} />
        <P d={WALLS_LO} $c="#e4e6ea" $sw={1} />
        <ellipse cx="1336" cy="618" rx="26" ry="32" fill="none" stroke="#8a8a8e" vectorEffect="non-scaling-stroke" />
      </g>
      <P d="M942.7 425 V816 M960 425 V816 M935 425 H966 M924 518 H953 M924 561.5 H953 M924 646 H953 M924 671 H953 M924 688 H953 M940 430 L946 421 M940 523 L946 514 M941 566 L947 557 M941 651 L947 642 M942 692 L948 683 M957 430 L963 421" $c="#a0a0a4" />
      {COLS.map(([x, y]) => <rect key={`${x}-${y}`} x={x - 6} y={y - 6} width="12" height="12" fill="none" stroke="#444" strokeWidth="2.4" />)}
      {TEXTS.map((o, i) => {
        const X = 300 + o.x / 2.45, Y = (o.low ? 660 : 300) + o.y / 3;
        return <PlanText key={i} x={X} y={Y} fontSize={o.s || 10} textLength={o.w} lengthAdjust="spacingAndGlyphs" transform={o.r ? `rotate(-90 ${X} ${Y})` : undefined}>{o.t}</PlanText>;
      })}
      {RIGHT_TEXTS.map(([t, x, y, w], i) => {
        const X = 900 + x / 3, Y = 300 + y / 3;
        return <PlanText key={i} x={X} y={Y} fontSize="10" textLength={w} lengthAdjust="spacingAndGlyphs" transform={`rotate(-90 ${X} ${Y})`}>{t}</PlanText>;
      })}
      <rect x="315.5" y="882.7" width="91.5" height="18" fill="none" stroke="#b4b4b8" />
      <PlanText x="361" y="892" fontSize="10" fontWeight="700" textLength="76" $c="#55555a">1830 square ft</PlanText>
      <FloorWord x="450" y="977" textLength="70" lengthAdjust="spacingAndGlyphs">FLOOR</FloorWord>
      <FloorWord x="539" y="977" textLength="53" lengthAdjust="spacingAndGlyphs">PLAN</FloorWord>
      <circle cx="862" cy="550" r="1.8" fill="#aaa" /><circle cx="1165" cy="759" r="1" fill="#777" />
    </SoftGroup>
    {RED_V.map(([x, a, b]) => <line key={x} x1={x} y1={a} x2={x} y2={b} stroke="#f00" strokeWidth="1.1" />)}
    {RED_H.map(y => <line key={y} x1="358" y1={y} x2="910" y2={y} stroke="#f00" strokeWidth="1.1" />)}
    <line x1="358" y1="858" x2="910" y2="858" stroke="#ff5a60" strokeWidth="2" />
    {TITLE_WORDS.map(([t, x, w]) => (
      <TitleWord key={t} transform={`translate(${x} 596) scale(${SQUEEZE} 1)`} textLength={w / SQUEEZE}>{t}</TitleWord>
    ))}
  </PlanSvg>
);

const Compass: React.FC = () => (
  <Overlay width={1900} height={820} viewBox="8 183 1900 820">
    <circle cx="1825" cy="288.3" r="54" fill="none" stroke="#3f454d" strokeWidth="12.5" />
    <rect x="1799.5" y="263" width="51" height="51.5" fill="#adb0b1" stroke="#83878a" />
    <rect x="1809" y="273" width="32" height="32" fill="#9da2a7" />
    <text x="1825" y="289" fill="#4d5157" fontFamily="Liberation Sans" fontWeight="700" fontSize="11" textAnchor="middle" dominantBaseline="central">TOP</text>
    {([["N", 1825, 233], ["S", 1825, 346], ["W", 1769, 289], ["E", 1881.5, 289]] as [string, number, number][]).map(([t, x, y]) => (
      <text key={t} x={x} y={y} fill="#a8abae" fontFamily="Liberation Sans" fontWeight="700" fontSize="20" textAnchor="middle" dominantBaseline="central">{t}</text>
    ))}
    <rect x="1801.5" y="377" width="47" height="16" rx="3" fill="#6d7482" stroke="#83899a" />
    <text x="1806" y="385" fill="#3d4249" fontFamily="Liberation Sans" fontSize="10" dominantBaseline="central">WCS</text>
    <path d="M1836 382 H1844 L1840 387Z" fill="none" stroke="#8e94a0" />
    <rect x="1847" y="199" width="10" height="3" fill="#f0f0f0" />
    <rect x="1867" y="195" width="8" height="8" fill="none" stroke="#f0f0f0" strokeWidth="2" />
    <path d="M1870 192.5 H1878 V200" fill="none" stroke="#f0f0f0" />
    <path d="M1888 194 L1895.5 201.5 M1895.5 194 L1888 201.5" stroke="#f0f0f0" strokeWidth="2.2" />
  </Overlay>
);

export default function App() {
  return (
    <Screen>
      <Global />
      <DefsSvg>
        <defs>
          <linearGradient id="gw" x1="0" y1="0" x2="1" y2="1"><stop offset="0" stopColor="#ffffff" /><stop offset="1" stopColor="#aeb6c8" /></linearGradient>
          <linearGradient id="gb" x1="0" y1="0" x2="1" y2="1"><stop offset="0" stopColor="#dce8f6" /><stop offset="1" stopColor="#6a92c8" /></linearGradient>
          <radialGradient id="gy"><stop offset="0" stopColor="#fff8c8" /><stop offset="1" stopColor="#e8cf70" /></radialGradient>
          <linearGradient id="gy2" x1="0" y1="0" x2="0" y2="1"><stop offset="0" stopColor="#f0d050" /><stop offset="1" stopColor="#b08a18" /></linearGradient>
        </defs>
      </DefsSvg>
      <Outline />
      <TopBand>
        <AppButton>
          {I.logo}
          <Caret $c="#c8c8c8" $m="13px 0 0 -1px" />
        </AppButton>
        <Qat>
          <QatSlot $w={6} />
          <QatSlot $w={23}>{I.qNew}</QatSlot><QatSlot $w={24}>{I.qOpen}</QatSlot><QatSlot $w={24}>{I.qSave}</QatSlot><QatSlot $w={24}>{I.qSaveAs}</QatSlot><QatSlot $w={24}>{I.qPrint}</QatSlot><QatSlot $w={24}>{I.qUndo}</QatSlot>
          <QatSlot $w={13}><Caret $c="#ccc" /></QatSlot><QatSlot $w={24}>{I.qRedo}</QatSlot><QatSlot $w={12}><Caret $c="#999" /></QatSlot><QatSlot $w={14}>{I.qMenu}</QatSlot>
        </Qat>
        <DocTitle>Autodesk AutoCAD 2017<DocName>2)BINA GARISAN SEBAGAI RUJUKAN.dwg</DocName></DocTitle>
        <SearchBar>
          <BarSlot $w={10}><Caret $c="#ddd" style={{ transform: "rotate(-90deg)" }} /></BarSlot>
          <SearchInput>Type a keyword or phrase</SearchInput>
          <BarSlot $w={25}>{I.binoc}</BarSlot>
          <BarSlot $w={22}>{I.user}</BarSlot>
          <BarSlot $w={44}><SignIn>Sign In</SignIn></BarSlot>
          <BarSlot $w={55}><Caret $c="#ccc" style={{ marginLeft: 36 }} /></BarSlot>
          <BarSlot $w={22}>{I.xch}</BarSlot>
          <BarSlot $w={26}>{I.a360}</BarSlot>
          <BarSlot $w={10}><Caret $c="#ccc" /></BarSlot>
          <Sep style={{ marginLeft: 6 }} />
          <BarSlot $w={32}>{I.help}</BarSlot>
          <BarSlot $w={7}><Caret $c="#ccc" /></BarSlot>
        </SearchBar>
        <WinButtons>
          <WinBtn $w={28}>{I.winMin}</WinBtn><WinBtn $w={27}>{I.winMax}</WinBtn><WinBtn $w={45}>{I.winX}</WinBtn>
        </WinButtons>
      </TopBand>
      <Frame>
        <TabRow>
          <Tab $w={51} $on>Home</Tab>
          {TABS.map(([t, w]) => <Tab key={t} $w={w}>{t}</Tab>)}
          <ToggleWrap>{I.ribbonToggle}<Caret $c="#ccc" /></ToggleWrap>
        </TabRow>
        <Ribbon>
          <Panel $w={223}>
            <PanelBody>
              <L w={44} icon="line" text={["Line"]} />
              <L w={42} icon="poly" text={["Polyline"]} />
              <L w={58} icon="circle" text={["Circle"]} arrow />
              <L w={34} icon="arc" text={["Arc"]} arrow />
              <Stack $w={45} $pl={9}>
                <Row>{I.rect}<PushCaret $m="0 3px 0 auto" /></Row><Row>{I.ellipse}<PushCaret $m="0 3px 0 auto" /></Row><Row>{I.hatch}<PushCaret $m="0 3px 0 auto" /></Row>
              </Stack>
            </PanelBody>
            <Title t="Draw" />
          </Panel>
          <Panel $w={249}>
            <PanelBody>
              <Stack $w={79} $pl={7}><Row>{I.move}Move</Row><Row>{I.copy}Copy</Row><Row>{I.stretch}Stretch</Row></Stack>
              <Stack $w={69}><Row>{I.rotate}Rotate</Row><Row>{I.mirror}Mirror</Row><Row>{I.scale}Scale</Row></Stack>
              <Stack $w={70}><Row>{I.trim}Trim<PushCaret $m="0 3px 0 auto" /></Row><Row>{I.fillet}Fillet<PushCaret $m="0 3px 0 auto" /></Row><Row>{I.array}Array<PushCaret $m="0 3px 0 auto" /></Row></Stack>
              <Stack $w={31} $pl={5}><Row>{I.erase}</Row><Row>{I.explode}</Row><Row>{I.offset}</Row></Stack>
            </PanelBody>
            <Title t="Modify" />
          </Panel>
          <Panel $w={187}>
            <PanelBody>
              <Large $w={46}>
                <LargeIcon><GlyphSvg width="34" height="34" viewBox="0 0 34 34"><text x="17" y="31" fill="#c8c8c8" fontFamily="Liberation Sans" fontSize="40" textAnchor="middle">A</text></GlyphSvg></LargeIcon>
                <LargeLabel>Text</LargeLabel>
                <Caret $m="4px 0 0" />
              </Large>
              <L w={61} icon="dim" text={["Dimension"]} />
              <Stack $w={80} $pl={6}><Row>{I.linear}Linear<PushCaret $m="0 3px 0 auto" /></Row><Row>{I.leader}Leader<PushCaret $m="0 0 0 auto" /></Row><Row>{I.table}Table</Row></Stack>
            </PanelBody>
            <Title t="Annotation" />
          </Panel>
          <Panel $w={271}>
            <PanelBody>
              <L w={62} icon="layerProps" text={["Layer", "Properties"]} />
              <LayerCol>
                <Combo $w={207}>
                  <Slot $w={3} />
                  <Slot $w={16}>{I.bulb}</Slot><Slot $w={20}>{I.sun}</Slot><Slot $w={18}>{I.lock}</Slot>
                  <Swatch $s={14} $b="#111" $ml={5} />
                  <span>00</span>
                  <PushCaret $c="#e8e8e8" />
                </Combo>
                <SlotRow style={{ marginTop: 1 }}>
                  <Slot $w={20}>{I.l1}</Slot><Slot $w={20}>{I.l2}</Slot><Slot $w={32}>{I.l3}</Slot><Slot $w={20}>{I.l4}</Slot><Slot $w={25}>{I.l5}</Slot>Make Current
                </SlotRow>
                <SlotRow>
                  <Slot $w={20}>{I.l6}</Slot><Slot $w={20}>{I.l7}</Slot><Slot $w={32}>{I.l8}</Slot><Slot $w={20}>{I.l9}</Slot><Slot $w={25}>{I.l10}</Slot>Match Layer
                </SlotRow>
              </LayerCol>
            </PanelBody>
            <Title t="Layers" />
          </Panel>
          <Panel $w={160}>
            <PanelBody>
              <L w={42} icon="insert" text={["Insert"]} arrow />
              <Stack $w={118} $pl={3}><Row>{I.create}Create</Row><Row>{I.edit}Edit</Row><Row>{I.attr}Edit Attributes<PushCaret $m="0 3px 0 auto" /></Row></Stack>
            </PanelBody>
            <Title t="Block" />
          </Panel>
          <Panel $w={263}>
            <PanelBody>
              <L w={63} icon="match" text={["Match", "Properties"]} />
              <PropIcons><PropRow><Wheel /></PropRow><PropRow>{I.weight}</PropRow><PropRow>{I.ltype}</PropRow></PropIcons>
              <LayerCol style={{ width: 181 }}>
                <Combo $w={180}><Swatch $s={16} $b="#999" $ml={12} /><span style={{ marginLeft: -2 }}>ByLayer</span><PushCaret $c="#e8e8e8" /></Combo>
                <Combo $w={180} $mt={1}><LineSample $w={58} />ByLayer<PushCaret $c="#e8e8e8" /></Combo>
                <Combo $w={180} $mt={2}><LineSample $w={58} />Continuous<PushCaret $c="#e8e8e8" /></Combo>
              </LayerCol>
            </PanelBody>
            <Title t="Properties" corner />
          </Panel>
          <Panel $w={67}>
            <PanelBody>
              <L w={39} icon="group" text={["Group"]} />
              <Stack $w={28}><Row $center>{I.g1}</Row><Row $center>{I.g2}</Row><Row $center><ActiveTool>{I.g3}</ActiveTool></Row></Stack>
            </PanelBody>
            <Title t="Groups" />
          </Panel>
          <Panel $w={95}>
            <PanelBody>
              <L w={69} icon="measure" text={["Measure"]} arrow />
              <Stack $w={26}><Row $center>{I.u1}</Row><Row $center>{I.u2}</Row><Row $center>{I.u3}</Row></Stack>
            </PanelBody>
            <Title t="Utilities" />
          </Panel>
          <Panel $w={78}>
            <PanelBody>
              <L w={52} icon="paste" text={["Paste"]} arrow />
              <Stack $w={26}><Row $center>{I.cut}</Row><Row $center>{I.copy2}</Row></Stack>
            </PanelBody>
            <PanelTitle><TitleMain>Clipboard</TitleMain></PanelTitle>
          </Panel>
          <Panel $w={60}>
            <PanelBody>
              <L w={60} icon="base" text={["Base"]} arrow />
            </PanelBody>
            <Title t="View" corner />
          </Panel>
        </Ribbon>
        <FileTabs>
          <FileTab $w={122} $mr={2}>Start</FileTab>
          <FileTab $w={233} $mr={7} $on><span>2)BINA GARISAN SEBAGAI RUJUKAN</span><Close>×</Close></FileTab>
          <PlusTab>+</PlusTab>
        </FileTabs>
        <Divider />
        <Viewport>
          <Plan />
          <Compass />
          <ViewLabel>[−][Top][2D Wireframe]</ViewLabel>
        </Viewport>
        <ModelBar>
          <SheetTab $w={54} $on>Model</SheetTab>
          <SheetTab $w={62}>Layout2</SheetTab>
          <SheetPlus $w={21}>+</SheetPlus>
          <StatusRight>
            <StatusGroup><StatusItem $w={47}>MODEL</StatusItem></StatusGroup>
            <StatusGroup><StatusItem $w={26}>{I.sGrid}</StatusItem><StatusItem $w={24}>{I.sSnap}</StatusItem><StatusItem $w={13}><Caret $c="#eee" /></StatusItem></StatusGroup>
            <StatusGroup>
              <StatusItem $w={24}>{I.sOrtho}</StatusItem><StatusItem $w={24}>{I.sPolar}</StatusItem><StatusItem $w={13}><Caret $c="#eee" /></StatusItem><StatusItem $w={26}>{I.sIso}</StatusItem><StatusItem $w={13}><Caret $c="#eee" /></StatusItem>
              <StatusItem $w={26}>{I.sTrack}</StatusItem><StatusItem $w={25}>{I.sOsnap}</StatusItem><StatusItem $w={14}><Caret $c="#eee" /></StatusItem>
            </StatusGroup>
            <StatusGroup>
              <StatusItem $w={24}>{I.sAn1}</StatusItem><StatusItem $w={25}>{I.sAn2}</StatusItem><StatusItem $w={24}>{I.sAn3}</StatusItem><StatusItem $w={23}>1:1</StatusItem><StatusItem $w={12}><Caret $c="#eee" /></StatusItem>
            </StatusGroup>
            <StatusGroup><StatusItem $w={24}>{I.sGear}</StatusItem><StatusItem $w={16}><Caret $c="#eee" /></StatusItem><StatusItem $w={23}>{I.sPlus}</StatusItem></StatusGroup>
            <StatusGroup><StatusItem $w={23}>{I.sWs}</StatusItem></StatusGroup>
            <StatusGroup><StatusItem $w={23}>{I.sHw}</StatusItem></StatusGroup>
            <StatusGroup><StatusItem $w={21}>{I.sCu}</StatusItem></StatusGroup>
            <StatusGroup><StatusItem $w={26}>{I.sFull}</StatusItem><StatusItem $w={22}>{I.sMenu}</StatusItem></StatusGroup>
          </StatusRight>
        </ModelBar>
      </Frame>
      <BottomBand />
    </Screen>
  );
}
